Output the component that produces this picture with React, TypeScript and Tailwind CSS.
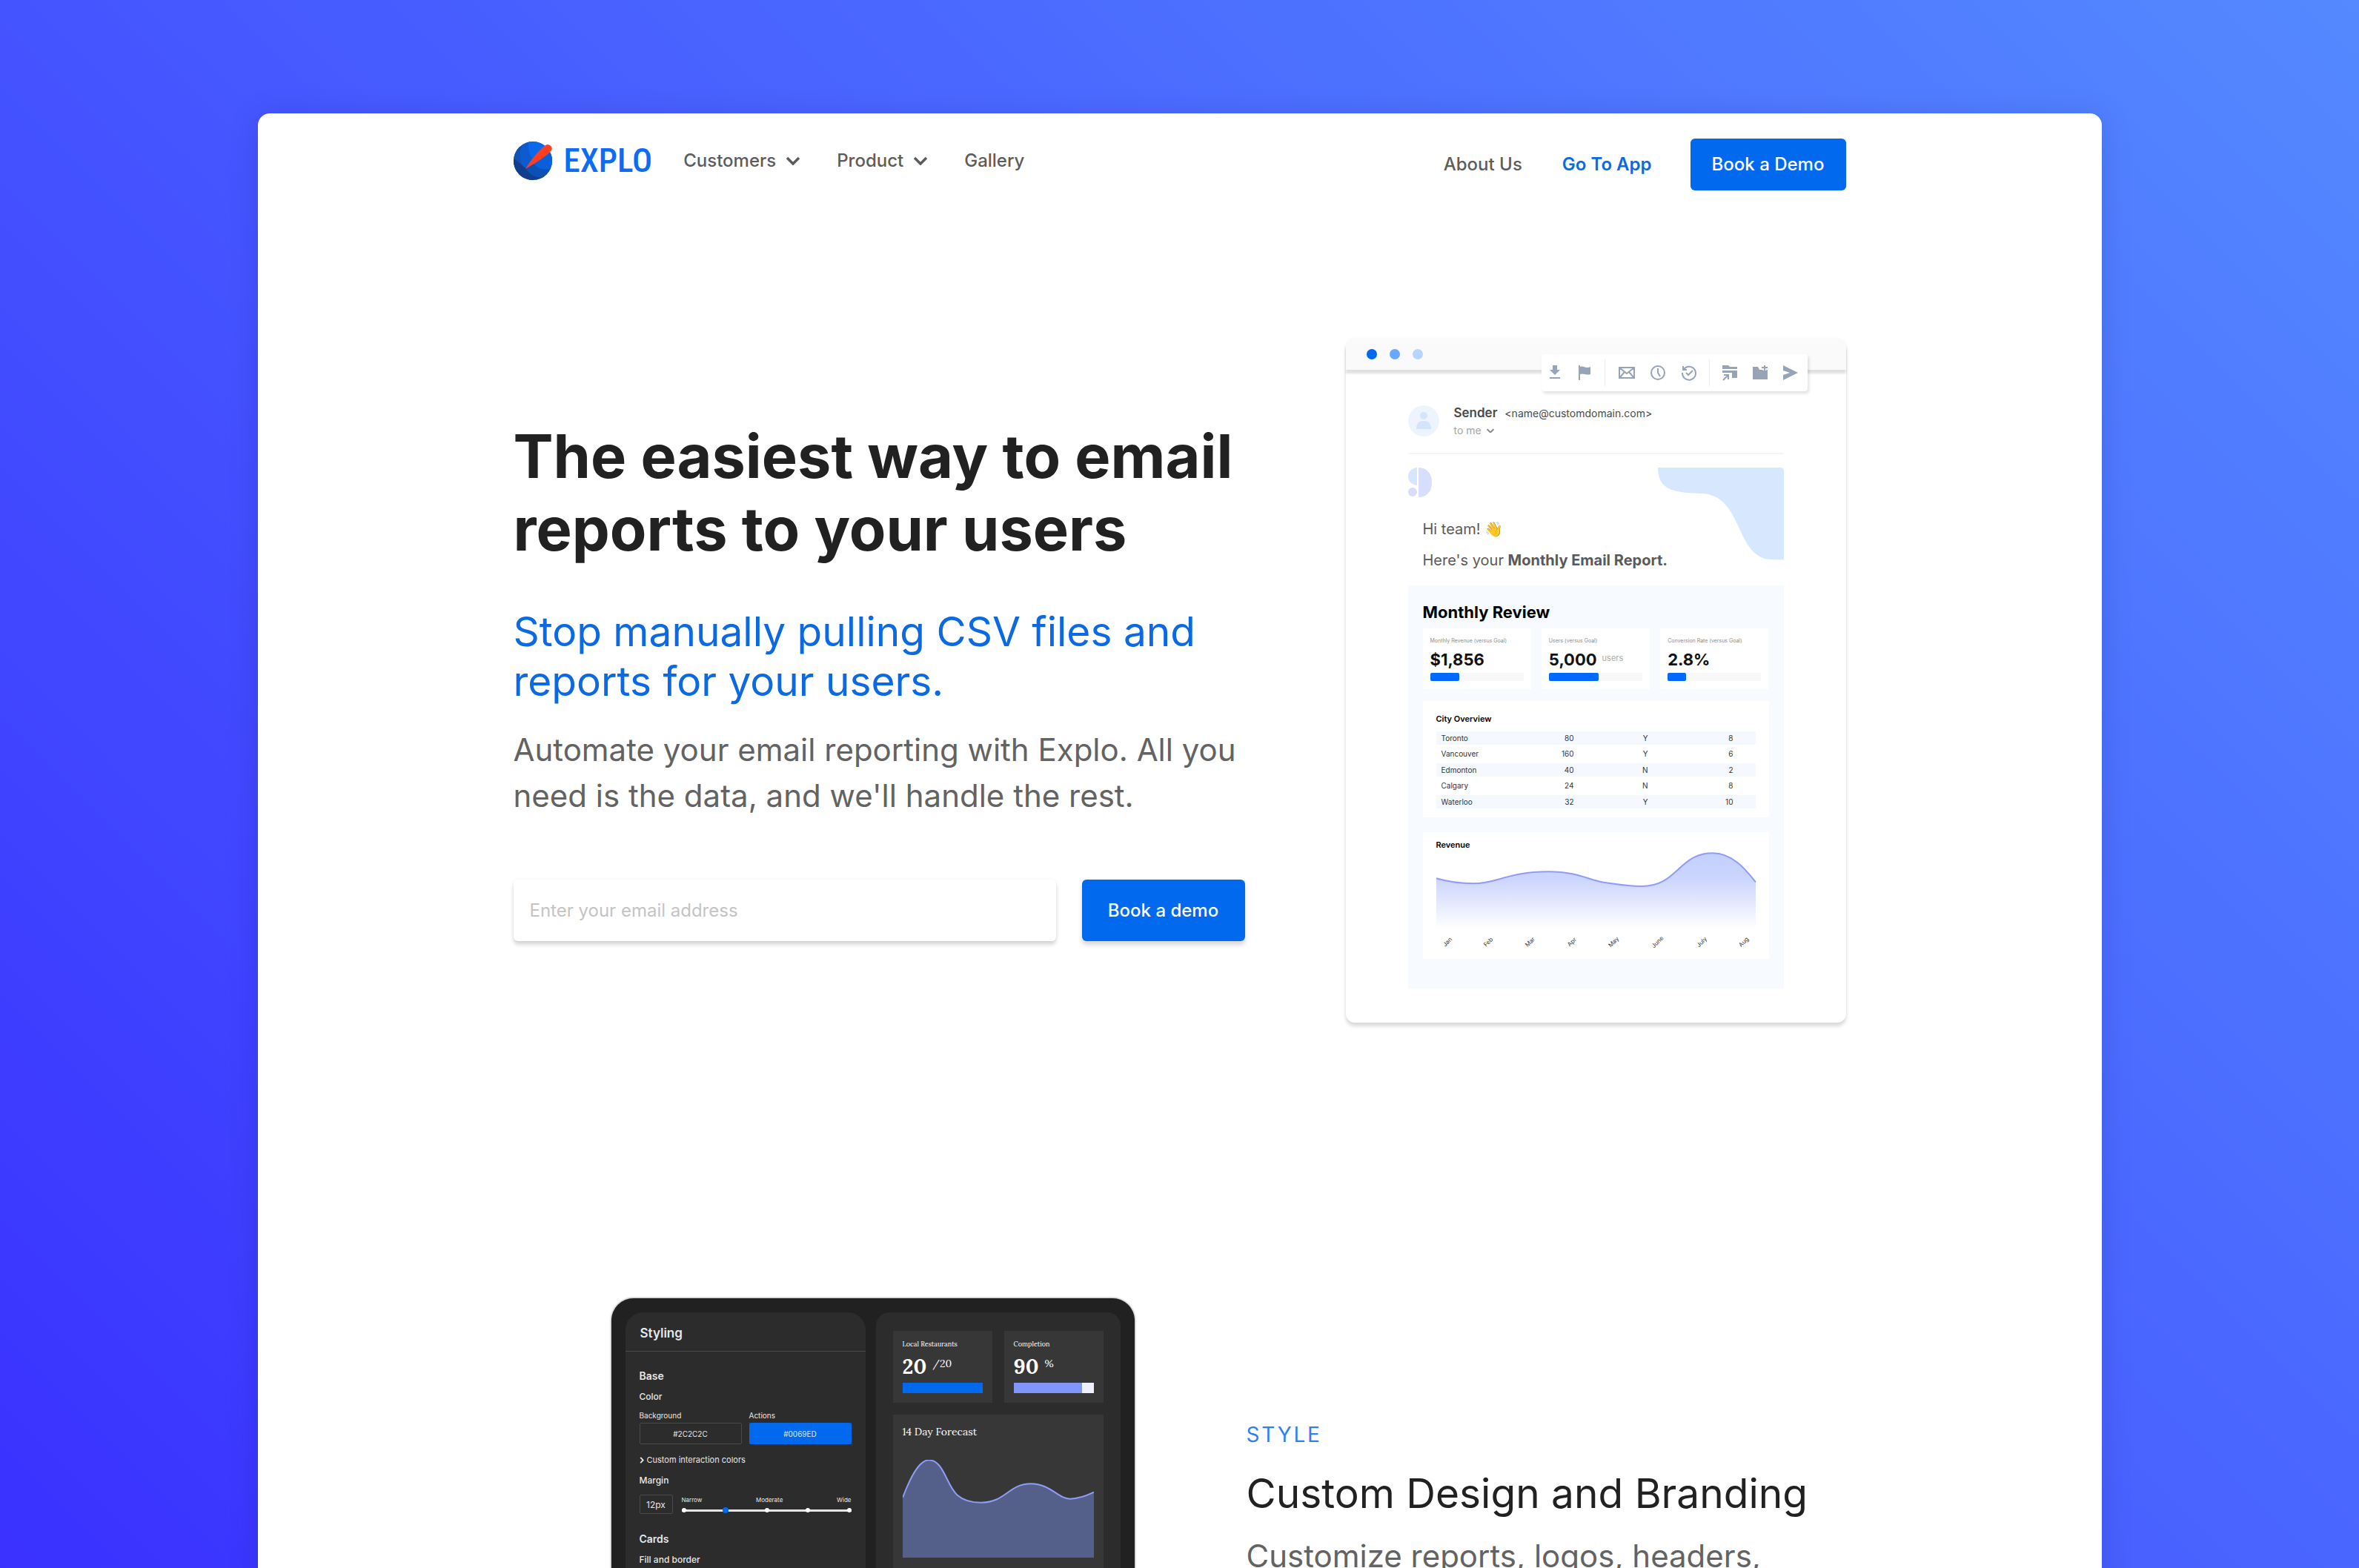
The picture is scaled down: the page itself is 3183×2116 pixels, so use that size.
import React from "react";

const cities = [
  ["Toronto", "80", "Y", "8"],
  ["Vancouver", "160", "Y", "6"],
  ["Edmonton", "40", "N", "2"],
  ["Calgary", "24", "N", "8"],
  ["Waterloo", "32", "Y", "10"],
];

const months = ["Jan", "Feb", "Mar", "Apr", "May", "June", "July", "Aug"];

const goals = [
  { label: "Monthly Revenue (versus Goal)", value: "$1,856", unit: "", percent: 31 },
  { label: "Users (versus Goal)", value: "5,000", unit: "users", percent: 53 },
  { label: "Conversion Rate (versus Goal)", value: "2.8%", unit: "", percent: 20 },
];

function Chevron({ className }: { className: string }) {
  return (
    <svg viewBox="0 0 18 12" className={className} fill="none" stroke="currentColor" strokeWidth="3.500" aria-hidden="true">
      <path d="M1 2l8 8 8-8" />
    </svg>
  );
}

function Logo() {
  return (
    <a href="#home" className="flex items-center gap-4" aria-label="Explo home">
      <svg viewBox="0 0 52 52" className="size-[52px]" aria-hidden="true">
        <defs>
          <clipPath id="globe">
            <circle cx="26" cy="26" r="26" />
          </clipPath>
        </defs>
        <g clipPath="url(#globe)">
          <rect width="52" height="52" fill="#0b4ba8" />
          <path d="M0 12L22 0 24 22 16 36 0 46z" fill="#1350b4" />
          <path d="M20 0C23 6 22 14 26 22L16 36C8 30 6 18 12 4z" fill="#0e5bd0" />
          <path d="M20 0h32v34c-8-6-16-6-22-4l-14 6 9-14C20 16 20 8 20 0z" fill="#0869ec" />
          <path d="M26 28l26-14v24c-10 2-20 0-26-10z" fill="#0a5fdc" />
          <path d="M16 36l10-6c6 8 16 9 26 6v16H30z" fill="#0b50b5" />
          <path d="M0 24c4 0 8 6 16 12 4 8 14 14 24 12L26 52H0z" fill="#123c8c" />
        </g>
        <path d="M43 5a5.500 5.500 0 0 1 8 7c-8 9-20 16-35 25C24 25 32 13 43 5z" fill="#ff3d1f" />
      </svg>
      <span className="font-['Liberation_Sans_Narrow','Roboto_Condensed','Liberation_Sans',sans-serif] text-[45px] leading-[52px] font-medium text-[#0d6cf2]">
        EXPLO
      </span>
    </a>
  );
}

function Header() {
  return (
    <header className="flex items-start justify-between pt-[34px] text-[24px] leading-8 font-medium text-[#5c5c5c]">
      <nav className="flex h-[60px] items-center" aria-label="Main">
        <Logo />
        <button type="button" className="ml-[42px] flex items-center gap-[14px]">
          Customers <Chevron className="w-[18px]" />
        </button>
        <button type="button" className="ml-[50px] flex items-center gap-[14px]">
          Product <Chevron className="w-[18px]" />
        </button>
        <a href="#gallery" className="ml-[50px]">Gallery</a>
      </nav>
      <div className="flex items-center">
        <a href="#about">About Us</a>
        <a href="#app" className="ml-[54px] font-semibold text-[#0b69e3]">Go To App</a>
        <a href="#demo" className="ml-[52px] flex h-[70px] w-[210px] items-center justify-center rounded-md bg-[#0069ed] text-white">
          Book a Demo
        </a>
      </div>
    </header>
  );
}

function ToolButton({ label, children }: { label: string; children: React.ReactNode }) {
  return (
    <button type="button" aria-label={label} className="size-[22px]">
      <svg viewBox="0 0 22 22" className="size-[22px]" fill="none" stroke="currentColor" strokeWidth="2" aria-hidden="true">
        {children}
      </svg>
    </button>
  );
}

function Toolbar() {
  return (
    <div className="absolute top-[21px] right-[52px] flex h-[50px] w-[359px] items-center rounded-sm bg-white pl-[7px] text-[#97a3b6] shadow-[2px_3px_4px_rgba(0,0,0,0.12)]">
      <div className="flex gap-[18px]">
        <ToolButton label="Download">
          <path d="M8 1h6v6h4l-7 7-7-7h4z" fill="currentColor" stroke="none" />
          <path d="M4 18h14" />
        </ToolButton>
        <ToolButton label="Flag">
          <path d="M4 1v20" />
          <path d="M5 3c5-2 7 3 14 0v10c-6 2-9-2-14 0z" fill="currentColor" stroke="none" />
        </ToolButton>
      </div>
      <div className="ml-4 h-9 w-px bg-[#ededed]" />
      <div className="ml-[18px] flex gap-[20px]">
        <ToolButton label="Mail">
          <path d="M1 4h20v14H1zM2 5l9 7 9-7M2 17l6-7M20 17l-6-7" />
        </ToolButton>
        <ToolButton label="Schedule">
          <circle cx="11" cy="11" r="9" />
          <path d="M11 5v6l3 5" />
        </ToolButton>
        <ToolButton label="History">
          <path d="M4 6a9 9 0 1 1-2 5M3 2v5h5M7 11l3 3 6-6" />
        </ToolButton>
      </div>
      <div className="ml-4 h-9 w-px bg-[#ededed]" />
      <div className="ml-[16px] flex gap-[19px]">
        <ToolButton label="Move to folder">
          <path d="M1 1h8l2 2h10v3H1zM1 8h20v10h-7v-7H1z" fill="currentColor" stroke="none" />
          <path d="M2 21l7-7M3 14h6v6" />
        </ToolButton>
        <ToolButton label="Add folder">
          <path d="M1 3h7l2 4h11v13H1z" fill="currentColor" stroke="none" />
          <path d="M17 1v7M13 4h8" stroke="#ffffff" strokeWidth="5" />
          <path d="M17 1v7M13 4h8" />
        </ToolButton>
        <ToolButton label="Send">
          <path d="M1 1l20 10L1 21v-7l9-3-9-3z" fill="currentColor" stroke="none" />
        </ToolButton>
      </div>
    </div>
  );
}

function GoalCard({ label, value, unit, percent }: (typeof goals)[number]) {
  return (
    <div className="h-[82px] bg-white px-[10px] pt-3">
      <p className="text-[7px] leading-[10px] whitespace-nowrap text-[#8b8b8b]">{label}</p>
      <p className="mt-[6px] flex items-start text-[22px] leading-7 font-bold text-[#111]">
        {value}
        {unit && <span className="ml-[7px] text-[11px] leading-6 font-normal text-[#aaa]">{unit}</span>}
      </p>
      <div className="mt-1 h-[11px] bg-[#f8f8f8]">
        <div className="h-full rounded-[2px] bg-[#0069ff]" style={{ width: `${percent}%` }} />
      </div>
    </div>
  );
}

function RevenueChart() {
  const line =
    "M158 317C200 330 250 338 300 338C390 338 430 290 585 290C700 290 740 325 800 334C860 343 890 349 940 349C1080 349 1080 215 1212 215C1290 215 1340 285 1376 332";
  return (
    <svg viewBox="158 205 1218 315" preserveAspectRatio="none" className="h-[105px] w-full overflow-visible" role="img" aria-label="Revenue by month">
      <defs>
        <linearGradient id="revenue" x1="0" y1="0" x2="0" y2="1">
          <stop offset="0" stopColor="#c3d0ff" />
          <stop offset="0.350" stopColor="#ccd5fd" />
          <stop offset="1" stopColor="#ffffff" />
        </linearGradient>
      </defs>
      <path d={`${line}V520H158z`} fill="url(#revenue)" />
      <path d={line} fill="none" stroke="#8f9cf8" strokeWidth="2" vectorEffect="non-scaling-stroke" />
    </svg>
  );
}

function EmailPreview() {
  return (
    <section aria-label="Email report preview" className="relative w-[675px] shrink-0 rounded-xl bg-white text-[#5a5a5a] shadow-[0_5px_5px_rgba(0,0,0,0.14),0_0_5px_rgba(0,0,0,0.04)]">
      <div className="flex h-[42px] items-center gap-[17px] rounded-t-xl bg-[#fafafa] pl-[28px] shadow-[0_5px_3px_rgba(0,0,0,0.12)]">
        <span className="size-[14px] rounded-full bg-[#0069ed]" />
        <span className="size-[14px] rounded-full bg-[#66a9ff]" />
        <span className="size-[14px] rounded-full bg-[#b5d5ff]" />
      </div>
      <Toolbar />
      <div className="px-[84px] pt-[48px] pb-[46px]">
        <div className="flex h-[66px] items-start border-b-2 border-[#f5f5f5]">
          <svg viewBox="0 0 42 42" className="size-[42px]" aria-hidden="true">
            <circle cx="21" cy="21" r="21" fill="#edf4fe" />
            <circle cx="21" cy="14" r="5" fill="#d3e4fb" />
            <path d="M11 32c0-8 4-11 10-11s10 3 10 11z" fill="#d3e4fb" />
          </svg>
          <div className="ml-5">
            <p className="text-[14px] leading-5 text-[#4a4a4a]">
              <span className="mr-[6px] text-[17px] font-semibold">Sender</span> &lt;name@customdomain.com&gt;
            </p>
            <p className="mt-[2px] flex items-center gap-[7px] text-[14px] leading-[22px] text-[#a5a5a5]">
              to me <Chevron className="w-[10px] text-[#888]" />
            </p>
          </div>
        </div>
        <div className="mt-[18px] flex justify-between">
          <div className="min-w-0 flex-1">
            <svg viewBox="0 0 32 40" className="h-[40px] w-[32px]" aria-hidden="true">
              <path d="M12 0v24C4 23 0 18 0 12S4 1 12 0z" fill="#d6e6fe" />
              <circle cx="6" cy="33" r="6" fill="#d9dcfb" />
              <path d="M14 0c12 0 18 9 18 20s-6 20-18 20z" fill="#d8defd" />
            </svg>
            <p className="mt-[26px] ml-[20px] text-[20px] leading-[34px]">Hi team! 👋</p>
            <p className="mt-2 ml-[20px] text-[20px] leading-[34px] whitespace-nowrap">
              Here's your <strong className="font-bold">Monthly Email Report.</strong>
            </p>
          </div>
          <svg viewBox="0 0 170 124" className="h-[124px] w-[170px] shrink-0" aria-hidden="true">
            <path d="M0 0h165q5 0 5 5v119h-16C104 124 116 38 60 35C20 34 0 30 0 0z" fill="#d6e7fe" />
          </svg>
        </div>
        <div className="mt-[17px] bg-[#f7fbff] px-5 pt-[22px] pb-[40px]">
          <h2 className="text-[22px] leading-[28px] font-bold text-black">Monthly Review</h2>
          <div className="mt-2 grid grid-cols-3 gap-[14px]">
            {goals.map((g) => (
              <GoalCard key={g.label} {...g} />
            ))}
          </div>
          <div className="mt-4 bg-white px-[18px] pt-[16px] pb-3">
            <h3 className="text-[11px] leading-4 font-semibold text-black">City Overview</h3>
            <table className="mt-[9px] w-full text-[10px] text-[#333]">
              <tbody>
                {cities.map((row) => (
                  <tr key={row[0]} className="h-[18px] even:h-[25px] odd:bg-[#f5f9ff]">
                    <td className="w-[110px] pl-[7px]">{row[0]}</td>
                    <td className="w-[76px] text-right">{row[1]}</td>
                    <td className="w-[104px] pr-1 text-right">{row[2]}</td>
                    <td className="pr-[30px] text-right">{row[3]}</td>
                  </tr>
                ))}
              </tbody>
            </table>
          </div>
          <div className="mt-5 h-[171px] bg-white px-[18px] pt-[9px]">
            <h3 className="text-[11px] leading-4 font-semibold text-black">Revenue</h3>
            <RevenueChart />
            <div className="mt-[12px] flex justify-between px-[8px] text-[8px] leading-3 text-[#333]">
              {months.map((m) => (
                <span key={m} className="-rotate-45">{m}</span>
              ))}
            </div>
          </div>
        </div>
      </div>
    </section>
  );
}

function Hero() {
  return (
    <section className="mt-[200px] flex items-center justify-between">
      <div className="w-[987px]">
        <h1 className="text-[81px] leading-[98px] font-bold text-[#212121]">
          The easiest way to email
          <br />
          reports to your users
        </h1>
        <p className="mt-14 text-[55px] leading-[67px] text-[#0b69e3]">
          Stop manually pulling CSV files and
          <br />
          reports for your users.
        </p>
        <p className="mt-7 text-[42px] leading-[62px] text-[#636363]">
          Automate your email reporting with Explo. All you
          <br />
          need is the data, and we'll handle the rest.
        </p>
        <form className="mt-[82px] flex gap-[35px]" onSubmit={(e) => e.preventDefault()}>
          <input
            type="email"
            aria-label="Email address"
            placeholder="Enter your email address"
            className="h-[83px] min-w-0 flex-1 rounded-md bg-white px-[22px] text-[24px] shadow-[0_5px_5px_rgba(0,0,0,0.15),0_0_5px_rgba(0,0,0,0.05)] placeholder:text-[#c4c4c4]"
          />
          <button type="submit" className="h-[83px] w-[220px] rounded-md bg-[#0069ed] text-[24px] font-medium text-white shadow-[0_5px_6px_rgba(0,0,0,0.16)]">
            Book a demo
          </button>
        </form>
      </div>
      <EmailPreview />
    </section>
  );
}

function StylingPanel() {
  return (
    <div className="w-[324px] rounded-t-[24px] bg-[#2c2c2c] pb-10 text-[#e8e8e8]">
      <h3 className="border-b border-[#4a4a4a] px-5 pt-[16px] pb-[12px] text-[17px] leading-6 font-semibold">Styling</h3>
      <div className="px-[19px] pt-[23px]">
        <h4 className="text-[14px] leading-5 font-semibold">Base</h4>
        <p className="mt-2 text-[12px] leading-5 font-medium">Color</p>
        <div className="mt-[8px] grid grid-cols-2 gap-[10px]">
          <label className="text-[10px] leading-[14px]">
            Background
            <input readOnly value="#2C2C2C" className="mt-[3px] block h-[29px] w-full rounded-[2px] border border-[#4a4a4a] text-center text-[10px]" />
          </label>
          <label className="text-[10px] leading-[14px]">
            Actions
            <input readOnly value="#0069ED" className="mt-[3px] block h-[29px] w-full rounded-[2px] bg-[#0069ed] text-center text-[10px]" />
          </label>
        </div>
        <button type="button" className="mt-[11px] flex items-center gap-[4px] text-[11px] leading-5">
          <svg viewBox="0 0 6 10" className="h-[9px] w-[6px]" fill="none" stroke="currentColor" strokeWidth="2" aria-hidden="true">
            <path d="M1 1l4 4-4 4" />
          </svg>
          Custom interaction colors
        </button>
        <p className="mt-[8px] text-[12px] leading-5 font-medium">Margin</p>
        <div className="mt-[9px] flex items-start gap-[12px]">
          <input readOnly aria-label="Margin in pixels" value="12px" className="h-[26px] w-[45px] rounded-[2px] border border-[#4a4a4a] text-center text-[12px]" />
          <div className="relative flex-1">
            <div className="flex justify-between text-[8px] leading-[14px]">
              <span>Narrow</span>
              <span>Moderate</span>
              <span>Wide</span>
            </div>
            <div className="mt-[3px] flex h-2 items-center bg-[linear-gradient(#e5e5e5,#e5e5e5)] bg-[length:100%_3px] bg-center bg-no-repeat">
              <div className="flex w-full items-center justify-between">
                <span className="size-[6px] rounded-full bg-white" />
                <span className="size-2 rounded-full bg-[#0069ed]" />
                <span className="size-[6px] rounded-full bg-white" />
                <span className="size-[6px] rounded-full bg-white" />
                <span className="size-[6px] rounded-full bg-white" />
              </div>
            </div>
            <input type="range" min="0" max="4" defaultValue="1" aria-label="Margin" className="absolute bottom-0 left-0 h-2 w-full opacity-0" />
          </div>
        </div>
        <h4 className="mt-[24px] text-[14px] leading-5 font-semibold">Cards</h4>
        <p className="mt-2 text-[12px] leading-5 font-medium">Fill and border</p>
      </div>
    </div>
  );
}

function ForecastPanel() {
  const line =
    "M175 850C205 770 240 698 280 698C340 698 350 800 395 840C420 862 450 870 490 870C590 870 600 794 690 794C770 794 800 855 848 855C885 855 915 842 944 828";
  return (
    <div className="w-[330px] rounded-t-[18px] bg-[#2c2c2c] px-[23px] pt-[25px] font-['Lora','Noto_Serif','Liberation_Serif',serif] text-white">
      <div className="grid grid-cols-2 gap-4">
        <div className="h-[97px] bg-[#373737] px-[13px] pt-[12px]">
          <p className="text-[9px] leading-3">Local Restaurants</p>
          <p className="mt-2 flex items-start text-[28px] leading-8 font-bold">
            20<span className="ml-2 text-[14px] leading-6 font-normal">/20</span>
          </p>
          <div className="mt-[6px] h-[14px] bg-[#0069ed]" />
        </div>
        <div className="h-[97px] bg-[#373737] px-[13px] pt-[12px]">
          <p className="text-[9px] leading-3">Completion</p>
          <p className="mt-2 flex items-start text-[28px] leading-8 font-bold">
            90<span className="ml-2 text-[14px] leading-6 font-normal">%</span>
          </p>
          <div className="mt-[6px] h-[14px] bg-[#eef0ff]">
            <div className="h-full w-[86%] bg-[#8196fb]" />
          </div>
        </div>
      </div>
      <div className="mt-4 h-[240px] bg-[#373737] px-[13px] pt-[13px]">
        <h3 className="text-[14px] leading-5">14 Day Forecast</h3>
        <svg viewBox="175 697 769 396" preserveAspectRatio="none" className="mt-[28px] h-[132px] w-full" role="img" aria-label="14 day forecast">
          <path d={`${line}V1093H175z`} fill="#546089" />
          <path d={line} fill="none" stroke="#8f9df8" strokeWidth="2" vectorEffect="non-scaling-stroke" />
        </svg>
      </div>
    </div>
  );
}

function StyleFeature() {
  return (
    <section className="mt-[372px] flex items-start pl-[132px]">
      <div className="flex w-[706px] shrink-0 justify-between rounded-t-[30px] bg-[#212121] px-[19px] pt-[19px] shadow-[0_0_3px_rgba(0,0,0,0.6)]">
        <StylingPanel />
        <ForecastPanel />
      </div>
      <div className="ml-[151px] pt-[167px]">
        <p className="text-[28px] leading-[34px] tracking-widest text-[#2f80f0]">STYLE</p>
        <h2 className="mt-7 text-[55px] leading-[68px] text-[#212121]">Custom Design and Branding</h2>
        <p className="mt-5 text-[42px] leading-[62px] text-[#636363]">Customize reports, logos, headers,</p>
      </div>
    </section>
  );
}

export default function App() {
  return (
    <div className="h-screen overflow-hidden bg-[linear-gradient(45deg,#3a31ff,#5489ff)] pt-[153px] font-['Inter',sans-serif]">
      <main className="mx-auto max-w-[2488px] rounded-t-2xl bg-white shadow-[0_4px_40px_rgba(0,0,80,0.15)]">
        <div className="mx-auto max-w-[1798px]">
          <Header />
          <Hero />
          <StyleFeature />
        </div>
      </main>
    </div>
  );
}
